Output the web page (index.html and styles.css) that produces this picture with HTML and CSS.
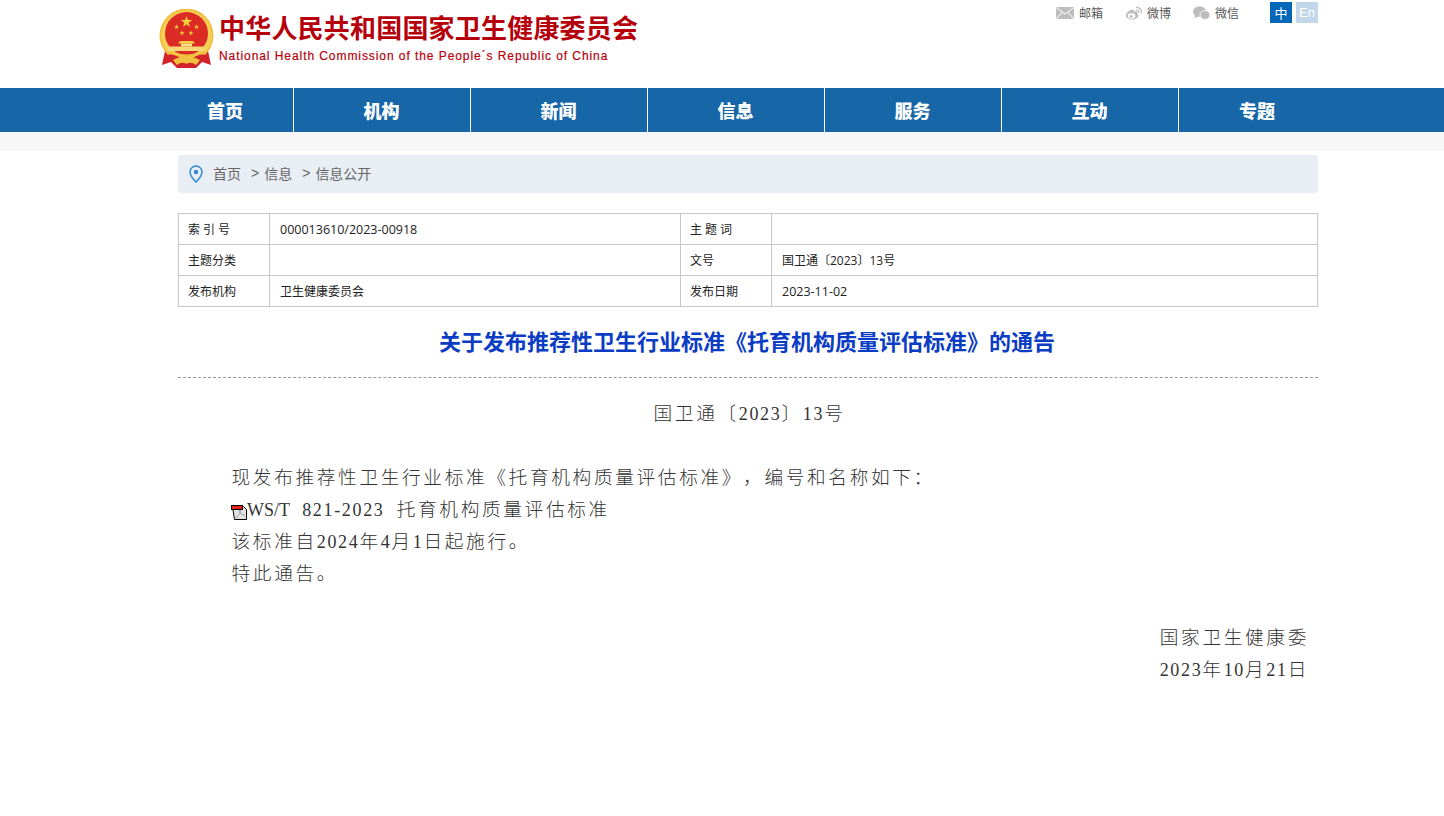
FILE: index.html
```html
<!DOCTYPE html>
<html lang="zh-CN">
<head>
<meta charset="utf-8">
<title>关于发布推荐性卫生行业标准《托育机构质量评估标准》的通告</title>
<link rel="stylesheet" href="styles.css">
</head>
<body>
<header class="top">
  <div class="brand">
    <svg class="emblem" viewBox="0 0 55 59" width="55" height="59" aria-hidden="true">
      <defs><polygon id="st" points="0,-6 1.400,-1.900 5.700,-1.900 2.200,.7 3.500,4.900 0,2.300 -3.500,4.900 -2.200,.7 -5.700,-1.900 -1.400,-1.900" fill="#f6d23c"/></defs>
      <path d="M6 42 L3 56 L12 53 L18 59 L37 59 L43 53 L52 56 L49 42 Z" fill="#d2232a"/>
      <circle cx="27.500" cy="26.500" r="27" fill="#f0c040"/>
      <circle cx="27.500" cy="26.500" r="25" fill="#f6cf55"/>
      <circle cx="27.500" cy="24.500" r="21.500" fill="#dc2a24"/>
      <use href="#st" transform="translate(27.500 13)"/>
      <use href="#st" transform="translate(17.500 18) scale(.45)"/>
      <use href="#st" transform="translate(37.500 18) scale(.45)"/>
      <use href="#st" transform="translate(23 24) scale(.45)"/>
      <use href="#st" transform="translate(32 24) scale(.45)"/>
      <path d="M21 32 H34 L36 34.500 H19 Z" fill="#f6d23c"/>
      <rect x="22" y="34.500" width="11" height="3" fill="#f9e38a"/>
      <path d="M10 37.500 H45 L47 42 H8 Z" fill="#f6d878"/>
      <path d="M6 41 Q27.500 50 49 41 L46 46 Q27.500 54 9 46 Z" fill="#f0c040"/>
      <path d="M6 46 Q16 44 22 50 L18 53 Q11 49 6 50 Z M49 46 Q39 44 33 50 L37 53 Q44 49 49 50 Z" fill="#d2232a"/>
      <path d="M14 51 Q22 46 27.500 50 Q33 46 41 51 L37 56 Q32 52 27.500 55 Q23 52 18 56 Z" fill="#f0c040"/>
    </svg>
    <div class="brand-text">
      <div class="brand-cn">中华人民共和国国家卫生健康委员会</div>
      <div class="brand-en">National Health Commission of the People´s Republic of China</div>
    </div>
  </div>
  <div class="tools">
    <a class="tool tool-mail">
      <svg viewBox="0 0 18 12" width="18" height="12" aria-hidden="true"><rect width="18" height="12" fill="#bdbdbd"/><path d="M0 .5 9 7l9-6.500M0 12l6.500-7M18 12l-6.500-7" fill="none" stroke="#fff" stroke-width="1"/></svg>
      <span>邮箱</span>
    </a>
    <a class="tool tool-weibo">
      <svg viewBox="0 0 17 14" width="17" height="14" aria-hidden="true"><path d="M1 9.500C1 6.500 5 3.500 7.500 3.500c1.300 0 1.600 1.200 1.200 2.300 2-.8 3.800-.5 3.800 1 0 .4-.1.700-.3 1 1 .3 1.300 1 1.300 1.700 0 2-3 4-6.500 4C3.500 13.500 1 12 1 9.500Z" fill="#bdbdbd"/><ellipse cx="6.500" cy="10" rx="3.800" ry="2.700" fill="#fff"/><circle cx="6" cy="10.300" r="1.500" fill="#bdbdbd"/><path d="M11 1.200a5 5 0 0 1 5.300 6.300M11.300 3.800a2.400 2.400 0 0 1 2.500 3" fill="none" stroke="#bdbdbd" stroke-width="1.300"/></svg>
      <span>微博</span>
    </a>
    <a class="tool tool-wechat">
      <svg viewBox="0 0 17 14" width="17" height="14" aria-hidden="true"><ellipse cx="6.500" cy="5.500" rx="6.500" ry="5.300" fill="#bdbdbd"/><path d="M2 9 1.500 12.500 6 10Z" fill="#bdbdbd"/><ellipse cx="12" cy="9" rx="5" ry="4.500" fill="#bdbdbd" stroke="#fff" stroke-width=".8"/></svg>
      <span>微信</span>
    </a>
    <a class="lang lang-on">中</a>
    <a class="lang lang-off">En</a>
  </div>
</header>

<nav class="nav">
  <div class="nav-inner">
    <a class="nav-item nav-first">首页</a>
    <a class="nav-item">机构</a>
    <a class="nav-item">新闻</a>
    <a class="nav-item">信息</a>
    <a class="nav-item">服务</a>
    <a class="nav-item">互动</a>
    <a class="nav-item nav-last">专题</a>
  </div>
</nav>
<div class="band"></div>

<main class="wrap">
  <div class="crumb">
    <svg class="pin" viewBox="0 0 14 18" width="14" height="18" aria-hidden="true"><path d="M7 1a6 6 0 0 0-6 6c0 4 6 10 6 10s6-6 6-10a6 6 0 0 0-6-6Z" fill="none" stroke="#2f8bd8" stroke-width="1.500"/><circle cx="7" cy="7" r="2.200" fill="#2f8bd8"/></svg>
    <span class="crumb-text">首页</span>
    <span class="crumb-sep">&gt;</span><span class="crumb-text">信息</span>
    <span class="crumb-sep">&gt;</span><span class="crumb-text">信息公开</span>
  </div>

  <table class="meta">
    <tr>
      <td class="k"><span class="spaced">索引号</span></td><td class="v1"><span class="num">000013610/2023-00918</span></td>
      <td class="k"><span class="spaced">主题词</span></td><td class="v2"></td>
    </tr>
    <tr>
      <td class="k">主题分类</td><td class="v1"></td>
      <td class="k">文号</td><td class="v2">国卫通〔2023〕13号</td>
    </tr>
    <tr>
      <td class="k">发布机构</td><td class="v1">卫生健康委员会</td>
      <td class="k">发布日期</td><td class="v2"><span class="num">2023-11-02</span></td>
    </tr>
  </table>

  <h1 class="title">关于发布推荐性卫生行业标准《托育机构质量评估标准》的通告</h1>

  <article class="doc">
    <p class="line docno">国卫通〔<span class="lat">2023</span>〕<span class="lat">13</span>号</p>
    <p class="line"></p>
    <p class="line para">现发布推荐性卫生行业标准《托育机构质量评估标准》，编号和名称如下：</p>
    <p class="line para"><svg class="pdf" viewBox="0 0 16 17" width="16" height="17" aria-hidden="true"><path d="M1.500 3.500h11l3 3v10h-12z" fill="#e4e4e4" stroke="#000"/><path d="M5 15C8 12 10 9 9 7c-.6 3 1 5 5 5" fill="none" stroke="#9a9a9a"/><rect x=".5" y="2.500" width="11" height="4" fill="#e8201a" stroke="#000"/></svg><span class="lat-tight">WS/T</span><span class="lat"> 821-2023 </span>托育机构质量评估标准</p>
    <p class="line para">该标准自<span class="lat">2024</span>年<span class="lat">4</span>月<span class="lat">1</span>日起施行。</p>
    <p class="line para">特此通告。</p>
    <p class="line"></p>
    <p class="line sign">国家卫生健康委</p>
    <p class="line sign"><span class="lat">2023</span>年<span class="lat">10</span>月<span class="lat">21</span>日</p>
  </article>
</main>
</body>
</html>
```
FILE: styles.css
```css
* { box-sizing: border-box; }
html, body { margin: 0; padding: 0; }
body { background: #fff; font-family: "Noto Sans CJK SC", "Liberation Sans", sans-serif; color: #333; text-spacing-trim: space-all; }
a { text-decoration: none; color: inherit; }

.top { height: 88px; width: 1159px; margin-left: 159px; display: flex; justify-content: space-between; }
.brand { display: flex; align-items: flex-start; padding-top: 9px; }
.emblem { flex: none; display: block; }
.brand-text { margin-left: 5px; padding-top: 2px; }
.brand-cn { font-family: "Noto Sans CJK SC", sans-serif; font-weight: 700; font-size: 26px; line-height: 32px; letter-spacing: .2px; color: #b5000c; white-space: nowrap; }
.brand-en { font-family: "Liberation Sans", sans-serif; font-size: 12px; line-height: 15px; letter-spacing: .93px; color: #b5000c; margin-top: 6px; white-space: nowrap; -webkit-text-stroke: .2px #b5000c; }

.tools { display: flex; align-items: center; height: 24px; padding-top: 1px; font-size: 12px; color: #555; }
.tool { display: flex; align-items: center; gap: 5px; }
.tool-mail { margin-right: 22px; }
.tool-weibo { margin-right: 22px; }
.tool-wechat { margin-right: 31px; }
.lang { width: 22px; height: 21px; display: flex; align-items: center; justify-content: center; color: #fff; font-size: 13px; }
.lang-on { background: #0068b7; margin-right: 4px; }
.lang-off { background: #c2d8ea; font-family: "Liberation Sans", sans-serif; }

.nav { height: 44px; background: #1766a8; }
.nav-inner { margin-left: 157px; display: flex; height: 44px; }
.nav-item { width: 177px; height: 44px; line-height: 44px; padding-right: 1px; text-align: center; color: #fff; font-size: 18px; font-weight: 900; border-left: 1px solid #fff; }
.nav-first { width: 136px; border-left: 0; padding-right: 0; }
.nav-last { width: 158px; }

.band { height: 19px; background: #f7f7f7; }

.wrap { width: 1140px; margin-left: 178px; padding-top: 4px; }
.crumb { height: 38px; background: #e9edf4; border-radius: 2px; display: flex; align-items: center; padding-left: 11px; font-size: 14px; color: #666; }
.pin { margin-right: 10px; }
.crumb-text { white-space: nowrap; padding-bottom: 3px; }
.crumb-sep { margin: 0 5px 0 10px; font-family: "Liberation Sans", sans-serif; padding-bottom: 2px; }

.meta { width: 1140px; margin-top: 20px; border-collapse: collapse; table-layout: fixed; font-family: "Open Sans", "Noto Sans CJK SC", sans-serif; font-size: 12px; color: #222; }
.meta td { height: 31px; border: 1px solid #c8c8c8; padding: 2px 10px 0; line-height: 18px; white-space: nowrap; }
.meta td.k { width: 91px; padding-left: 9px; }
.meta td.v1 { width: 411px; }
.spaced { letter-spacing: 3px; }
.num { font-size: 12.500px; }

.title { margin: 20px 0 0; width: 1140px; height: 51px; line-height: 27px; padding-right: 2px; text-align: center; font-size: 22px; font-weight: 700; color: #0b3cc4; border-bottom: 1px dashed #999; }

.doc { font-family: "Noto Sans CJK SC", serif; font-weight: 300; font-size: 18.670px; letter-spacing: 2.660px; line-height: 32px; color: #333; padding-top: 18px; }
.doc p { margin: 0; }
.line { height: 32px; white-space: nowrap; }
.lat { font-family: "Liberation Serif", serif; font-size: 18px; letter-spacing: 1.670px; word-spacing: 6px; white-space: pre; }
.lat-tight { font-family: "Liberation Serif", serif; font-size: 18px; letter-spacing: 0; }
.docno { text-align: center; padding-left: 3px; }
.para { padding-left: 53.500px; }
.pdf { vertical-align: -4px; margin-left: -.5px; }
.sign { text-align: right; padding-right: 9px; }
```
